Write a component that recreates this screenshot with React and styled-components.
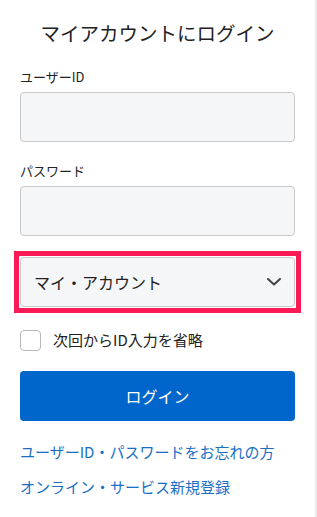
import React from "react";
import styled, { createGlobalStyle } from "styled-components";

const Global = createGlobalStyle`
  html, body { margin: 0; padding: 0; background: #fff; }
  body { font-family: "Noto Sans CJK JP", "Noto Sans", sans-serif; color: #222; }
  * { box-sizing: border-box; }
`;

const Page = styled.div`
  width: 317px;
  min-height: 517px;
  border-right: 2px solid #ececec;
  padding: 0 20px;
  display: flex;
  flex-direction: column;
`;

const Title = styled.h1`
  margin: 19px 0 0;
  font-size: 19.5px;
  font-weight: 400;
  line-height: 28px;
  text-align: center;
  color: #222;
`;

const Label = styled.label`
  display: block;
  margin-top: ${(p) => p.$top}px;
  font-size: 13px;
  line-height: 18px;
  color: #222;
`;

const Input = styled.input`
  display: block;
  width: 100%;
  height: 50px;
  margin-top: 6px;
  background: #f5f6f8;
  border: 1px solid #c8c8c8;
  border-radius: 4px;
  font: inherit;
  outline: none;
`;

const Highlight = styled.div`
  margin: 15px -6px 0;
  padding: 1px;
  border: 5px solid #fa1a55;
`;

const SelectBox = styled.div`
  height: 50px;
  display: flex;
  align-items: center;
  justify-content: space-between;
  padding: 0 13px;
  background: #f5f6f8;
  border: 1px solid #c8c8c8;
  border-radius: 4px;
  font-size: 16px;
  color: #222;
`;

const CheckRow = styled.label`
  margin-top: 16px;
  display: flex;
  align-items: center;
  gap: 12px;
  font-size: 15px;
  line-height: 22px;
  color: #222;
`;

const Box = styled.span`
  width: 21px;
  height: 21px;
  border: 1px solid #b8b8b8;
  border-radius: 4px;
  background: #fff;
  flex: none;
`;

const Button = styled.button`
  margin-top: 20px;
  height: 50px;
  width: 100%;
  border: none;
  border-radius: 4px;
  background: #0066cc;
  color: #fff;
  font: inherit;
  font-size: 16px;
`;

const LinkText = styled.a`
  display: block;
  margin-top: ${(p) => p.$top}px;
  font-size: 15px;
  line-height: 22px;
  color: #1a6fc4;
  text-decoration: none;
`;

export default function App() {
  return (
    <>
      <Global />
      <Page>
        <Title>マイアカウントにログイン</Title>
        <Label $top={21}>ユーザーID</Label>
        <Input type="text" />
        <Label $top={20}>パスワード</Label>
        <Input type="password" />
        <Highlight>
          <SelectBox>
            <span>マイ・アカウント</span>
            <svg width="14" height="8" viewBox="0 0 14 8" fill="none">
              <path d="M1 1l6 5.5L13 1" stroke="#444" strokeWidth="2" strokeLinecap="round" strokeLinejoin="round" />
            </svg>
          </SelectBox>
        </Highlight>
        <CheckRow>
          <Box />
          <span>次回からID入力を省略</span>
        </CheckRow>
        <Button>ログイン</Button>
        <LinkText href="#" $top={20}>ユーザーID・パスワードをお忘れの方</LinkText>
        <LinkText href="#" $top={13}>オンライン・サービス新規登録</LinkText>
      </Page>
    </>
  );
}
